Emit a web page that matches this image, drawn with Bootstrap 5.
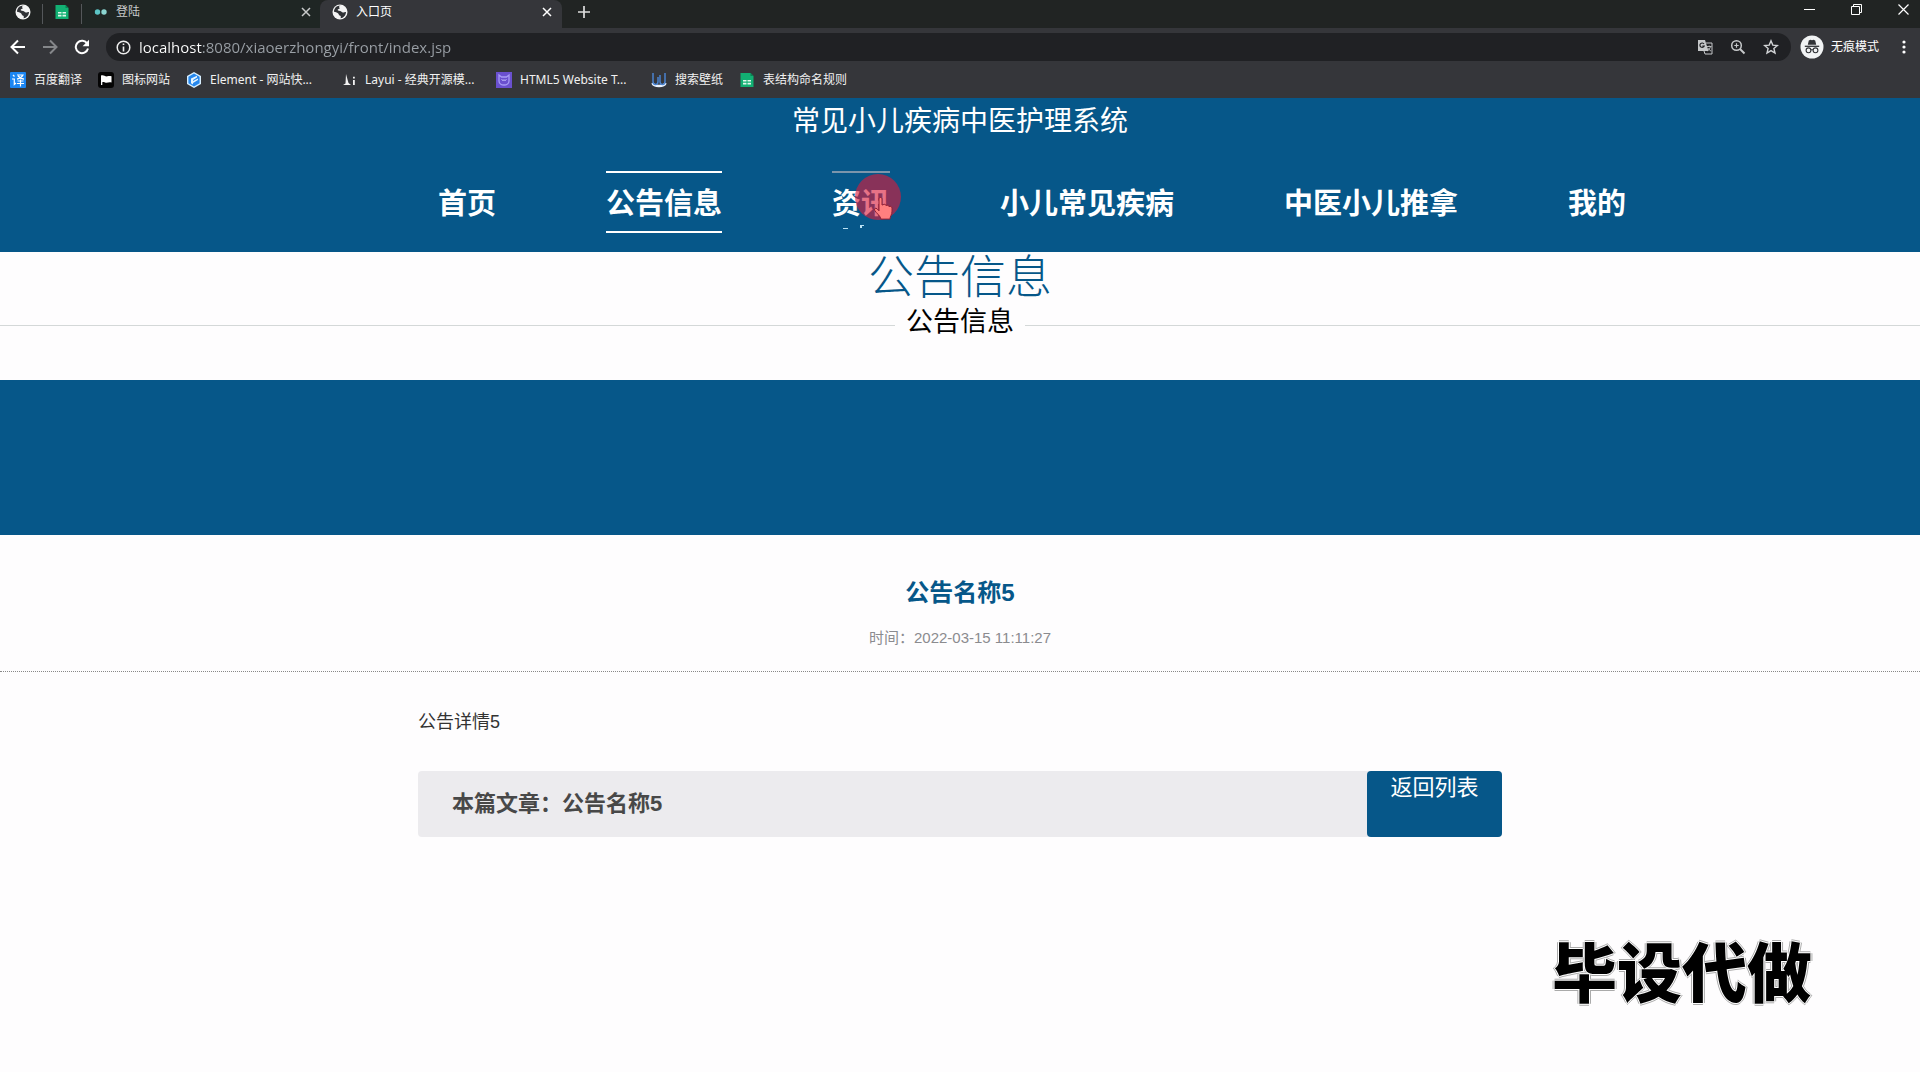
<!DOCTYPE html>
<html lang="zh-CN">
<head>
<meta charset="utf-8">
<meta name="viewport" content="width=device-width, initial-scale=1">
<title>入口页</title>
<link href="https://cdn.jsdelivr.net/npm/bootstrap@5.3.0/dist/css/bootstrap.min.css" rel="stylesheet">
<style>
:root { --site-blue: #065789; --ui: "Noto Sans", "Noto Sans CJK SC", sans-serif; }
body { background: #fefdfe; color: #333; font-family: "Liberation Sans", "Noto Sans CJK SC", sans-serif; min-height: 100vh; }
svg { display: block; flex: none; }
/* browser frame */
.chrome { background: #35363a; color: #fff; font-family: var(--ui); }
.chrome button { background: none; border: 0; padding: 0; color: inherit; display: block; }
.tab-strip { height: 28px; background: #212423; padding-bottom: 4px; }
.tab-strip > * { height: 28px; }
.pinned { width: 39px; border-right: 1px solid #54575a; height: 20px !important; padding-left: 4px; }
.pinned-first { width: 43px; }
.browser-tab { width: 238px; padding: 0 9px 4px 12px; font-size: 12px; background: #1f2624; color: #c8caca; }
.browser-tab a { color: inherit; }
.browser-tab.current { width: 242px; background: #35363a; color: #fff; border-radius: 8px 8px 0 0; padding-right: 10px; }
.win-buttons { gap: 36px; padding: 0 11px 10px 0; }
.tool-row { height: 38px; padding: 0 11px 0 10px; }
.address { height: 28px; border-radius: 14px; background: #202124; padding: 0 12px 0 10px; gap: 8px; margin-left: 16px; }
.address input { border: 0; outline: 0; min-width: 0; padding: 0; font-size: 15px; line-height: 24px; font-family: "Open Sans", "Noto Sans CJK SC", sans-serif; color: transparent; background: linear-gradient(90deg, #fff 63px, #9aa0a6 63px); -webkit-background-clip: text; background-clip: text; }
.address .tools { gap: 17px; color: #c6c8ca; }
.incognito { height: 26px; border-radius: 13px; background: #242529; padding-right: 10px; margin-left: 9px; margin-right: 4px; font-size: 12px; gap: 7px; }
.bookmarks { height: 32px; padding: 0 10px 4px; gap: 16px; font-size: 12px; }
.bookmarks a { color: #f1f1f1; gap: 8px; }
.bookmarks .wide { width: 139px; }
/* site */
.site-head { background: var(--site-blue); padding-bottom: 19px; }
.site-title { font-size: 28px; line-height: 48px; font-weight: 400; }
.site-nav { gap: 110px; padding: 25px 0 0 144px; }
.site-nav a { color: #fff; font-size: 29px; font-weight: 700; line-height: 54px; padding-top: 4px; border: solid transparent; border-width: 2px 0; white-space: nowrap; text-decoration: none; position: relative; }
.site-nav a.current { border-color: #fff; }
.site-nav a.hovering { border-top-color: #7b95ab; }
.click-spot { position: absolute; left: 22px; top: 0; }
.section-title { color: var(--site-blue); font-size: 46px; line-height: 50px; font-weight: 300; }
.section-sub { color: #000; font-size: 27px; line-height: 40px; gap: 11px; padding-bottom: 38px; }
.section-sub hr { margin: 6px 0 0; color: #d4d8d8; opacity: 1; }
.banner { height: 155px; background: var(--site-blue); }
.article-head { padding: 34px 0 12px; border-bottom: 1px dotted #888; }
.article-head h2 { color: var(--site-blue); font-size: 24px; line-height: 48px; font-weight: 700; }
.article-head p { color: #8b8b8f; font-size: 15px; line-height: 42px; }
.article { max-width: 1084px; padding: 32px 0; }
.article-text { font-size: 18px; line-height: 36px; margin-bottom: 31px; }
.article-bar { height: 66px; background: #ecebee; border-radius: 4px; }
.article-bar strong { font-size: 22px; line-height: 66px; padding-left: 34px; color: #484848; }
.back-btn { width: 135px; border-radius: 4px; background: var(--site-blue); color: #fff; font-size: 22px; line-height: 34px; }
.back-btn:hover { background: #044a76; color: #fff; }
.watermark { position: fixed; right: 108px; bottom: 63px; font: 900 65px/80px "Noto Sans CJK SC", sans-serif; color: #000; text-shadow: 1px 0 #fff, -1px 0 #fff, 0 1px #fff, 0 -1px #fff, 2px 0 #aaa, -2px 0 #aaa, 0 2px #aaa, 0 -2px #aaa; }
</style>
</head>
<body>
<svg width="0" height="0" class="position-absolute" aria-hidden="true">
  <symbol id="globe" viewBox="0 0 16 16"><circle cx="8" cy="8" r="7.5" fill="#f4f4f4"/><path d="M9 1.800C7 2 6.500 3 7.500 3.800S6.500 5 5.800 5.500 6.500 7 8 7s1.500 1.500 3 1.500 2-.8 3-.5C13.800 11.500 11.500 14 8.500 14.200 9.500 12.500 8.500 11.500 7 11.200 7 9.500 5 8.500 2 7.800 2 4.500 4.500 2 7 1.800z" fill="#303236"/></symbol>
  <symbol id="sheet" viewBox="0 0 16 16"><path d="M1.500 1h10l3 3v11h-13z" fill="#12b073"/><path d="M11.500 1v3h3z" fill="#0a7f51"/><path d="M4 8h3.500v1.600H4zm4.500 0H12v1.600H8.500zM4 10.800h3.500v1.600H4zm4.500 0H12v1.600H8.500z" fill="#dff7ec"/></symbol>
  <symbol id="cross" viewBox="0 0 10 10"><path d="M1 1l8 8M9 1L1 9" stroke="currentColor" stroke-width="1.500"/></symbol>
</svg>

<div class="chrome">
  <div class="tab-strip d-flex">
    <a href="#" class="pinned pinned-first d-flex align-items-center justify-content-center mt-1 pb-1" aria-label="固定页"><svg width="16" height="16"><use href="#globe"/></svg></a>
    <a href="#" class="pinned d-flex align-items-center justify-content-center mt-1 pe-1 pb-1" aria-label="表格"><svg width="16" height="16"><use href="#sheet"/></svg></a>
    <div class="browser-tab d-flex align-items-center">
      <svg width="14" height="8" viewBox="0 0 14 8"><circle cx="3.500" cy="4" r="2.700" fill="#5cc5c6"/><circle cx="10" cy="4" r="2.700" fill="#8bd5d0"/></svg>
      <a href="#" class="text-decoration-none flex-grow-1 ms-2">登陆</a>
      <button type="button" aria-label="关闭登陆"><svg width="10" height="10"><use href="#cross"/></svg></button>
    </div>
    <div class="browser-tab current d-flex align-items-center">
      <svg width="16" height="16"><use href="#globe"/></svg>
      <a href="#" class="text-decoration-none flex-grow-1 ms-2">入口页</a>
      <button type="button" aria-label="关闭入口页"><svg width="10" height="10"><use href="#cross"/></svg></button>
    </div>
    <button type="button" class="ms-3 pb-1" aria-label="新标签页"><svg width="12" height="12" viewBox="0 0 12 12"><path d="M6 0v12M0 6h12" stroke="#ddd" stroke-width="1.700"/></svg></button>
    <div class="win-buttons d-flex align-items-center ms-auto">
      <button type="button" aria-label="最小化"><svg width="11" height="11" viewBox="0 0 11 11"><path d="M0 5.500h11" stroke="#fff"/></svg></button>
      <button type="button" aria-label="还原"><svg width="11" height="11" viewBox="0 0 11 11"><path d="M.5 2.500h8v8h-8zM2.500 2.500v-2h8v8h-2" fill="none" stroke="#fff"/></svg></button>
      <button type="button" aria-label="关闭"><svg width="11" height="11" viewBox="0 0 11 11"><path d="M.5.500l10 10M10.500.500l-10 10" stroke="#fff" stroke-width="1.200"/></svg></button>
    </div>
  </div>

  <div class="tool-row d-flex align-items-center">
    <button type="button" aria-label="后退"><svg width="16" height="16" viewBox="0 0 16 16"><path d="M15 8H2M8 1.500L1.500 8 8 14.500" fill="none" stroke="#fff" stroke-width="2"/></svg></button>
    <button type="button" class="ms-3" aria-label="前进"><svg width="16" height="16" viewBox="0 0 16 16"><path d="M1 8h13M8 1.500L14.500 8 8 14.500" fill="none" stroke="#85878a" stroke-width="2"/></svg></button>
    <button type="button" class="ms-3" aria-label="重新加载"><svg width="16" height="16" viewBox="0 0 16 16"><path d="M13.300 4.800A6.200 6.200 0 1 0 14 9.500" fill="none" stroke="#fff" stroke-width="2"/><path d="M15 .8v6.400H8.600z" fill="#fff"/></svg></button>
    <div class="address d-flex align-items-center flex-grow-1">
      <svg width="15" height="15" viewBox="0 0 15 15"><circle cx="7.500" cy="7.500" r="6.300" fill="none" stroke="#eee" stroke-width="1.500"/><path d="M7.500 6.500v5M7.500 3.500v1.600" stroke="#eee" stroke-width="1.600"/></svg>
      <input type="text" class="flex-grow-1" aria-label="地址栏" value="localhost:8080/xiaoerzhongyi/front/index.jsp">
      <div class="tools d-flex align-items-center">
        <button type="button" aria-label="翻译此页"><svg width="16" height="16" viewBox="0 0 16 16"><path d="M1 1h7l3.500 11H1z" fill="#c6c8ca"/><path d="M9 4h6v11H8l-1-3" fill="none" stroke="#c6c8ca"/><path d="M7 5a2.200 2.200 0 1 0 .2 2H5.300" fill="none" stroke="#202124" stroke-width="1.200"/><path d="M10 7.500h4.500M12.200 6.500v1M13.500 7.500c-.4 2-1.700 3.500-3 4.300M11 9c.5 1.300 1.700 2.300 3 3" fill="none" stroke="#c6c8ca" stroke-width=".9"/></svg></button>
        <button type="button" aria-label="缩放"><svg width="16" height="16" viewBox="0 0 16 16"><circle cx="6.500" cy="6.500" r="4.800" fill="none" stroke="#c6c8ca" stroke-width="1.500"/><path d="M10 10l4.500 4.500" stroke="#c6c8ca" stroke-width="1.900"/><path d="M6.500 4.300v4.400M4.300 6.500h4.400" stroke="#c6c8ca" stroke-width="1.200"/></svg></button>
        <button type="button" aria-label="收藏"><svg width="16" height="16" viewBox="0 0 16 16"><path d="M8 1.800l1.800 4.300 4.600.4-3.500 3 1.100 4.600L8 11.600l-4 2.500 1.100-4.600-3.500-3 4.600-.4z" fill="none" stroke="#d2d4d6" stroke-width="1.400"/></svg></button>
      </div>
    </div>
    <button type="button" class="incognito d-flex align-items-center">
      <svg width="24" height="24" viewBox="0 0 24 24"><circle cx="12" cy="12" r="11.500" fill="#f1f3f4"/><path d="M8.800 5.500l1.700-.8 1.500.5 1.500-.5 1.700.8 1 4.300H7.800z" fill="#303236"/><path d="M4.800 11.300h14.400" stroke="#303236" stroke-width="1.300"/><circle cx="8.500" cy="15.300" r="2.400" fill="none" stroke="#303236" stroke-width="1.100"/><circle cx="15.500" cy="15.300" r="2.400" fill="none" stroke="#303236" stroke-width="1.100"/><path d="M10.900 15q1.100-.8 2.200 0" fill="none" stroke="#303236"/></svg>
      <span>无痕模式</span>
    </button>
    <button type="button" class="ms-3" aria-label="菜单"><svg width="10" height="16" viewBox="0 0 10 16"><g fill="#fff"><circle cx="5" cy="3" r="1.600"/><circle cx="5" cy="8" r="1.600"/><circle cx="5" cy="13" r="1.600"/></g></svg></button>
  </div>

  <nav class="bookmarks d-flex align-items-center" aria-label="书签">
    <a href="#" class="d-flex align-items-center text-decoration-none"><svg width="16" height="16" viewBox="0 0 16 16"><rect width="16" height="16" rx="1" fill="#1c86f2"/><path d="M3 3l1.500 1.500M2 7h2.300v5.500L6 11M7 3h6c-1 2-3.500 3.500-6 4.200M8 4c1.500 1.800 3.500 2.700 6 3.200M7.500 9h6M7 11.500h7M10.500 7.500V14.500" fill="none" stroke="#fff" stroke-width="1.200"/></svg><span>百度翻译</span></a>
    <a href="#" class="d-flex align-items-center text-decoration-none"><svg width="16" height="16" viewBox="0 0 16 16"><rect width="16" height="16" rx="3" fill="#050505"/><path d="M3 3.500c3-1 4 1.500 6.500.8 1.500-.5 2.500-.3 4 0v6.200c-3-.8-4 .8-6.500 0C5.500 10 5 10 4.300 10.300V13H3z" fill="#fff"/></svg><span>图标网站</span></a>
    <a href="#" class="wide d-flex align-items-center text-decoration-none"><svg width="16" height="16" viewBox="0 0 16 16"><path d="M8 0l7 4v8l-7 4-7-4V4z" fill="#d8efff"/><path d="M8 1.500L13.600 4.800v6.400L8 14.500l-5.600-3.300V4.800z" fill="#2587ee"/><path d="M5 6.500l6-2.800v1.800L7 8v1l5-2.500v1.500L7 11v1.500l-2-1.200z" fill="#e6f5ff"/></svg><span class="text-nowrap">Element - 网站快...</span></a>
    <a href="#" class="wide d-flex align-items-center text-decoration-none"><svg width="16" height="16" viewBox="0 0 16 16"><path d="M5 2l2.500 9L10 13H2l2.500-1.500zM12 8h1.800v5H12zM12 4.800h1.800v1.800H12z" fill="#f2f2f2"/></svg><span class="text-nowrap">Layui - 经典开源模...</span></a>
    <a href="#" class="wide d-flex align-items-center text-decoration-none"><svg width="16" height="16" viewBox="0 0 16 16"><rect width="16" height="16" fill="#6a50cf"/><path d="M3 3l2.500 2h5L13 3v6c0 2.500-2.500 4-5 4S3 11.500 3 9z" fill="none" stroke="#a99cf6" stroke-width="1.300"/><path d="M5.500 7.500l1.500 1 1-.7 1 .7 1.500-1" fill="none" stroke="#c9c2ff"/></svg><span class="text-nowrap">HTML5 Website T...</span></a>
    <a href="#" class="d-flex align-items-center text-decoration-none"><svg width="16" height="16" viewBox="0 0 16 16"><path d="M1.500 11c1.500 4 11.500 4 13 0" fill="none" stroke="#e9f2ff" stroke-width="2.500"/><path d="M2 1v8.500c0 4 5 4 5 0V5M14 1v8.500c0 4-5 4-5 0V3" fill="none" stroke="#4a83cf" stroke-width="1.500"/></svg><span>搜索壁纸</span></a>
    <a href="#" class="d-flex align-items-center text-decoration-none"><svg width="16" height="16"><use href="#sheet"/></svg><span>表结构命名规则</span></a>
  </nav>
</div>

<header class="site-head text-white text-center">
  <h1 class="site-title m-0">常见小儿疾病中医护理系统</h1>
  <nav class="site-nav d-flex justify-content-center" aria-label="主导航">
    <a href="#">首页</a>
    <a href="#" class="current">公告信息</a>
    <a href="#" class="hovering">资讯<svg class="click-spot" width="50" height="62" viewBox="0 0 50 62" aria-hidden="true"><circle cx="24" cy="24" r="23" fill="#d91c3b" fill-opacity=".62"/><path d="M25 26c0-2 3-2 3 0v6l1-.2c1-1 3-.5 3 .8 1-.8 3-.3 3 1 1.300-.8 3 0 3 1.500v3c0 4-2 5-2 8h-9c-1-4-5-6-6.500-9-.7-1.600 1.200-2.600 2.500-1.300l2 2z" fill="#ff7f7f" stroke="#8f1f35" stroke-width="1"/></svg><svg class="position-absolute start-0 bottom-0" width="40" height="8" viewBox="0 0 40 8" aria-hidden="true"><path d="M11 5h5v1h-5zM28 2h4v1h-2v2h-2z" fill="#b9e2f5"/></svg></a>
    <a href="#">小儿常见疾病</a>
    <a href="#">中医小儿推拿</a>
    <a href="#">我的</a>
  </nav>
</header>

<main>
  <section class="text-center">
    <h2 class="section-title m-0">公告信息</h2>
    <div class="section-sub d-flex align-items-center">
      <hr class="flex-grow-1"><span>公告信息</span><hr class="flex-grow-1">
    </div>
  </section>
  <div class="banner"></div>
  <div class="article-head text-center">
    <h2 class="m-0">公告名称5</h2>
    <p class="m-0">时间：2022-03-15 11:11:27</p>
  </div>
  <article class="article container-fluid">
    <p class="article-text">公告详情5</p>
    <div class="article-bar d-flex">
      <strong class="flex-grow-1">本篇文章：公告名称5</strong>
      <button type="button" class="back-btn btn border-0 p-0 d-flex align-items-start justify-content-center">返回列表</button>
    </div>
  </article>
</main>
<div class="watermark">毕设代做</div>
<script src="https://cdn.jsdelivr.net/npm/bootstrap@5.3.0/dist/js/bootstrap.bundle.min.js"></script>
</body>
</html>
